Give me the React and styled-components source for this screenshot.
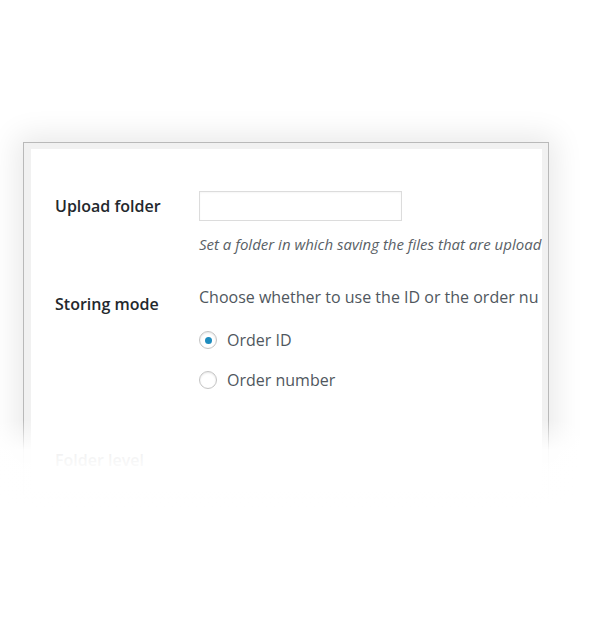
import React from 'react';
import styled, { createGlobalStyle } from 'styled-components';

const GlobalStyle = createGlobalStyle`
  html, body {
    margin: 0;
    padding: 0;
    background: #ffffff;
  }
  body {
    font-family: "Open Sans", "Noto Sans", sans-serif;
  }
`;

const Page = styled.div`
  width: 600px;
  height: 622px;
  padding: 142px 0 0 23px;
  box-sizing: border-box;
  position: relative;
  overflow: hidden;
`;

const Frame = styled.div`
  width: 526px;
  height: 356px;
  box-sizing: border-box;
  border: 1px solid #b9b9b9;
  background: #f1f1f1;
  padding: 6px 6px 6px 7px;
  box-shadow: 0 0 28px 6px rgba(0, 0, 0, 0.09);
`;

const Panel = styled.div`
  background: #ffffff;
  height: 100%;
  overflow: hidden;
  padding: 43px 0 0 24px;
  box-sizing: border-box;
`;

const Row = styled.div`
  display: flex;
  margin-top: ${(p) => p.$gap || 0}px;
`;

const Label = styled.div`
  width: 144px;
  flex: none;
  font-size: 16px;
  font-weight: 600;
  color: #23282d;
  line-height: 20px;
  padding-top: ${(p) => p.$offset || 0}px;
  white-space: nowrap;
`;

const Field = styled.div`
  display: flex;
  flex-direction: column;
  white-space: nowrap;
`;

const TextInput = styled.div`
  width: 203px;
  height: 30px;
  margin-top: -1px;
  box-sizing: border-box;
  border: 1px solid #dcdcdc;
  box-shadow: inset 0 1px 2px rgba(0, 0, 0, 0.04);
  background: #fff;
`;

const Description = styled.div`
  margin-top: 13px;
  font-size: 15px;
  font-style: italic;
  color: #5a5f66;
  line-height: 20px;
`;

const Text = styled.div`
  font-size: 16px;
  color: #50575e;
  line-height: 20px;
`;

const Option = styled.div`
  display: flex;
  align-items: center;
  gap: 10px;
  margin-top: ${(p) => p.$gap}px;
  font-size: 16px;
  color: #50575e;
  line-height: 20px;
`;

const Radio = styled.span`
  width: 18px;
  height: 18px;
  box-sizing: border-box;
  border-radius: 50%;
  border: 1px solid #c4c4c4;
  box-shadow: inset 0 1px 2px rgba(0, 0, 0, 0.1);
  display: flex;
  align-items: center;
  justify-content: center;

  &::after {
    content: '';
    width: 7px;
    height: 7px;
    border-radius: 50%;
    background: ${(p) => (p.$checked ? '#1e8cbe' : 'transparent')};
  }
`;

const Fade = styled.div`
  position: absolute;
  left: 0;
  right: 0;
  top: 420px;
  bottom: 0;
  background: linear-gradient(
    to bottom,
    rgba(255, 255, 255, 0) 0px,
    rgba(255, 255, 255, 0.93) 30px,
    rgba(255, 255, 255, 0.985) 50px,
    rgba(255, 255, 255, 1) 95px
  );
`;

export default function App() {
  return (
    <>
      <GlobalStyle />
      <Page>
        <Frame>
          <Panel>
            <Row>
              <Label $offset={4}>Upload folder</Label>
              <Field>
                <TextInput />
                <Description>Set a folder in which saving the files that are upload</Description>
              </Field>
            </Row>
            <Row $gap={33}>
              <Label $offset={7}>Storing mode</Label>
              <Field>
                <Text>Choose whether to use the ID or the order nu</Text>
                <Option $gap={23}>
                  <Radio $checked />
                  Order ID
                </Option>
                <Option $gap={20}>
                  <Radio />
                  Order number
                </Option>
              </Field>
            </Row>
            <Row $gap={60}>
              <Label>Folder level</Label>
            </Row>
          </Panel>
        </Frame>
        <Fade />
      </Page>
    </>
  );
}
